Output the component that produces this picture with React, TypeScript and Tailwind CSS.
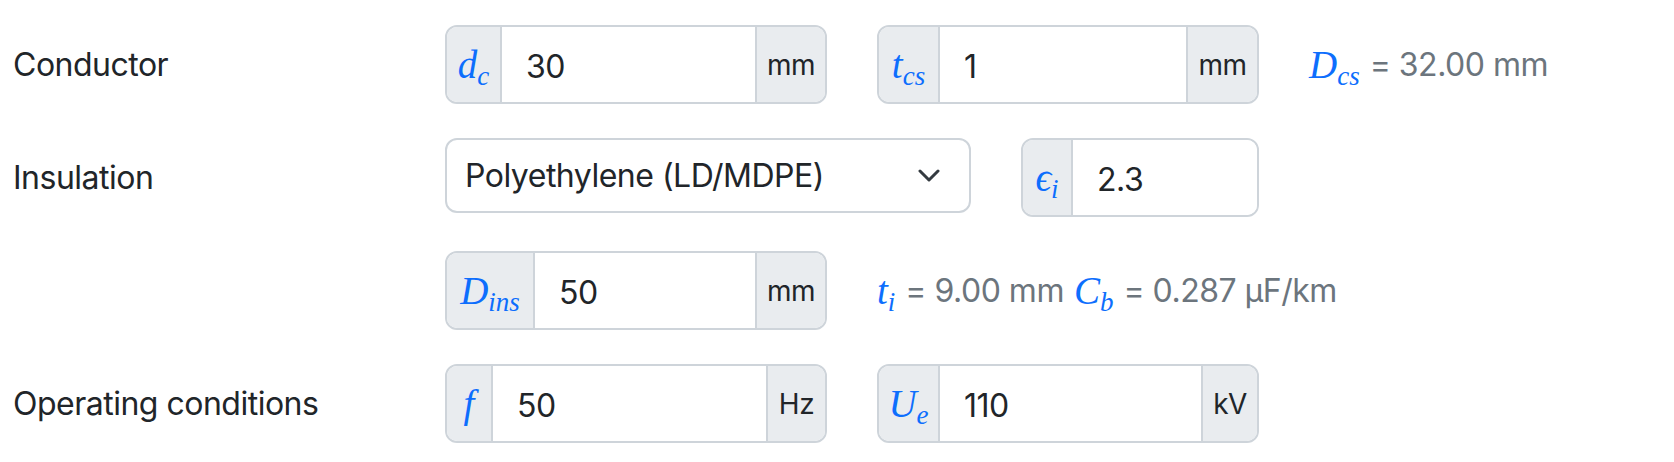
import React from "react";

const sans = "font-['Inter','Liberation_Sans',sans-serif] tracking-[-0.5px]";

function Sym({ base, sub }: { base: string; sub?: string }) {
  return (
    <span className="font-['Liberation_Serif','DejaVu_Serif',serif] italic text-[#0d6efd] text-[39px] leading-none whitespace-nowrap tracking-normal">
      {base}
      {sub && <sub className="text-[27px]">{sub}</sub>}
    </span>
  );
}

interface GroupProps {
  base: string;
  sub?: string;
  value: string;
  unit?: string;
  symW: string;
  unitW?: string;
  width: string;
}

function Group({ base, sub, value, unit, symW, unitW, width }: GroupProps) {
  return (
    <div className={`flex h-[79px] shrink-0 rounded-[12px] border-2 border-[#ced4da] overflow-hidden ${width}`}>
      <div className={`flex items-center justify-center bg-[#e9ecef] border-r-2 border-[#ced4da] ${symW}`}>
        <Sym base={base} sub={sub} />
      </div>
      <div className="flex-1 flex items-center px-6 pt-[4px] bg-white text-[32px] text-[#212529]">{value}</div>
      {unit && (
        <div className={`flex items-center justify-center bg-[#e9ecef] border-l-2 border-[#ced4da] text-[28px] text-[#212529] ${unitW}`}>
          {unit}
        </div>
      )}
    </div>
  );
}

function Row({ label, children }: { label?: string; children: React.ReactNode }) {
  return (
    <div className="flex items-start">
      <div className="w-[432px] shrink-0 h-[79px] flex items-center text-[32px] text-[#212529]">{label}</div>
      <div className="flex items-start gap-[50px]">{children}</div>
    </div>
  );
}

function Result({ children }: { children: React.ReactNode }) {
  return (
    <div className="h-[79px] flex items-center gap-[10px] text-[32px] text-[#6c757d] whitespace-nowrap">{children}</div>
  );
}

export default function App() {
  return (
    <div className={`w-[1674px] h-[462px] bg-white pl-[13px] pt-[25px] flex flex-col gap-[34px] ${sans}`}>
      <Row label="Conductor">
        <Group base="d" sub="c" value="30" unit="mm" symW="w-[55px]" unitW="w-[70px]" width="w-[382px]" />
        <Group base="t" sub="cs" value="1" unit="mm" symW="w-[61px]" unitW="w-[71px]" width="w-[382px]" />
        <Result>
          <Sym base="D" sub="cs" />
          <span>= 32.00 mm</span>
        </Result>
      </Row>

      <Row label="Insulation">
        <div className="w-[526px] h-[75px] shrink-0 rounded-[12px] border-2 border-[#ced4da] bg-white flex items-center justify-between pl-[18px] pr-[29px] text-[32px] text-[#212529]">
          <span>Polyethylene (LD/MDPE)</span>
          <svg width="22" height="14" viewBox="0 0 22 14" fill="none">
            <path d="M2 2 L11 11 L20 2" stroke="#343a40" strokeWidth="3" strokeLinecap="round" strokeLinejoin="round" />
          </svg>
        </div>
        <Group base="ϵ" sub="i" value="2.3" symW="w-[50px]" width="w-[238px]" />
      </Row>

      <Row>
        <Group base="D" sub="ins" value="50" unit="mm" symW="w-[88px]" unitW="w-[70px]" width="w-[382px]" />
        <Result>
          <span className="flex items-center gap-[10px]">
            <Sym base="t" sub="i" />
            <span>= 9.00 mm</span>
          </span>
          <span className="flex items-center gap-[10px]">
            <Sym base="C" sub="b" />
            <span>= 0.287 μF/km</span>
          </span>
        </Result>
      </Row>

      <Row label="Operating conditions">
        <Group base="f" value="50" unit="Hz" symW="w-[46px]" unitW="w-[59px]" width="w-[382px]" />
        <Group base="U" sub="e" value="110" unit="kV" symW="w-[61px]" unitW="w-[56px]" width="w-[382px]" />
      </Row>
    </div>
  );
}
